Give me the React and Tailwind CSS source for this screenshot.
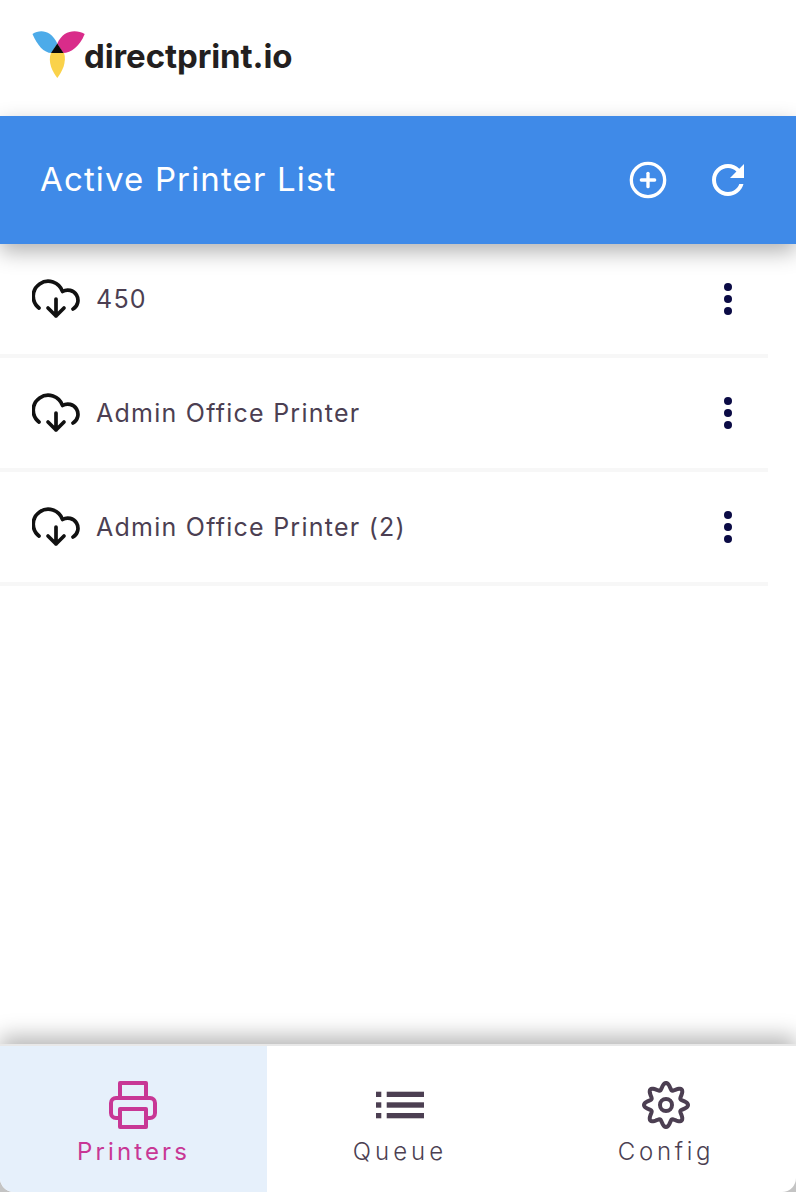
import React from 'react';
import { CirclePlus } from 'lucide-react';

const printers = ['450', 'Admin Office Printer', 'Admin Office Printer (2)'];

// 8 rounded lobes around the centre of a 48x48 box
const gearPath =
    Array.from({ length: 160 }, (_, i) => {
        const a = (i / 160) * Math.PI * 2;
        const r = 18.8 + 3.2 * Math.cos(8 * a);
        return `${i === 0 ? 'M' : 'L'}${(24 + r * Math.sin(a)).toFixed(2)} ${(24 - r * Math.cos(a)).toFixed(2)}`;
    }).join('') + 'Z';

const Logo = () => (
    <svg width="54" height="48" viewBox="32 31 54 48" className="mt-[31px] shrink-0 self-start">
        <path d="M32.500 34C40 29 51 30 57.300 43.500L51.500 53C44 53 37 45 32.500 34Z" fill="#4dabe9" />
        <path d="M84.700 34C76 29 63 30 57.300 43.500L63 53C71 53 80 46 84.700 34Z" fill="#d92c8a" />
        <path d="M51 52.700H64C67 62 62 72 57.300 78C52.500 72 47.500 62 51 52.700Z" fill="#fad24a" />
        <path d="M57.300 43.500L63.500 53H51Z" fill="#0a0a0a" />
    </svg>
);

const RefreshIcon = () => (
    <svg width="48" height="48" viewBox="0 0 24 24" fill="#ffffff">
        <path d="M17.65 6.35C16.2 4.9 14.21 4 12 4c-4.42 0-7.99 3.58-7.99 8s3.57 8 7.99 8c3.73 0 6.84-2.55 7.73-6h-2.08c-.82 2.33-3.04 4-5.65 4-3.31 0-6-2.69-6-6s2.69-6 6-6c1.66 0 3.14.69 4.22 1.78L13 11h7V4l-2.350 2.350z" />
    </svg>
);

const CloudIcon = () => (
    <svg width="48" height="40" viewBox="0 0 48 40" fill="none" stroke="#111111" strokeWidth="3.7" strokeLinecap="round" strokeLinejoin="round" className="shrink-0">
        <path d="M7 29A15 15 0 1 1 30.500 12.500A10.200 10.200 0 0 1 41 30" />
        <path d="M24 20V37M16 29L24 37L32 29" />
    </svg>
);

const MoreIcon = () => (
    <svg width="48" height="48" viewBox="0 0 48 48" fill="#0b0b45">
        <circle cx="24" cy="12" r="4" />
        <circle cx="24" cy="24" r="4" />
        <circle cx="24" cy="36" r="4" />
    </svg>
);

const PrinterIcon = () => (
    <svg width="48" height="48" viewBox="0 0 48 48" fill="none" stroke="#c83795" strokeWidth="4" strokeLinejoin="round" className="-ml-px">
        <path d="M11 15V2H37V15" />
        <path d="M11 37H7A5 5 0 0 1 2 32V22A5 5 0 0 1 7 17H41A5 5 0 0 1 46 22V32A5 5 0 0 1 41 37H37" />
        <rect x="11" y="28" width="26" height="18" />
    </svg>
);

const ListIcon = () => (
    <svg width="48" height="48" viewBox="0 0 48 48" fill="#4c3f52">
        <rect x="0" y="10.700" width="5.300" height="5.300" />
        <rect x="10.700" y="10.700" width="37.300" height="5.300" />
        <rect x="0" y="21.300" width="5.300" height="5.400" />
        <rect x="10.700" y="21.300" width="37.300" height="5.400" />
        <rect x="0" y="32" width="5.300" height="5.300" />
        <rect x="10.700" y="32" width="37.300" height="5.300" />
    </svg>
);

const GearIcon = () => (
    <svg width="48" height="48" viewBox="0 0 48 48" fill="none" stroke="#4c3f52" strokeWidth="4">
        <path d={gearPath} />
        <circle cx="24" cy="24" r="6" />
    </svg>
);

const App = () => {
    return (
        <div className="flex h-[1192px] w-[796px] flex-col overflow-hidden bg-white font-['Inter',sans-serif]">
            <div className="flex h-[116px] shrink-0 items-center pl-8">
                <Logo />
                <span className="ml-[-2px] mt-[-2px] text-[33px] font-bold tracking-[-0.1px] text-[#231f20]">directprint.io</span>
            </div>

            <div className="relative z-10 flex h-32 shrink-0 items-center justify-between bg-[#3f8ae8] pl-10 pr-11 shadow-[0_8px_20px_rgba(0,0,0,0.3)]">
                <h1 className="text-[33px] font-normal tracking-[1.15px] text-white">Active Printer List</h1>
                <div className="flex items-center gap-8">
                    <div className="flex size-12 items-center justify-center">
                        <CirclePlus size={40} color="#ffffff" strokeWidth={2} />
                    </div>
                    <RefreshIcon />
                </div>
            </div>

            <div className="flex-1">
                {printers.map((name) => (
                    <div key={name} className="mr-7 flex h-[114px] items-center border-b-4 border-[#f7f7f7] pl-8 pr-4">
                        <CloudIcon />
                        <span className="ml-4 mt-px flex-1 text-[25px] tracking-[1.25px] text-[#4c3f52]">{name}</span>
                        <MoreIcon />
                    </div>
                ))}
            </div>

            <div className="relative z-10 flex h-[148px] shrink-0 bg-[#c4c4c4] shadow-[0_-8px_20px_rgba(0,0,0,0.28)]">
                <div className="flex w-full overflow-hidden rounded-b-[14px] border-t-2 border-[#e8e8e8] bg-white">
                    <div className="flex w-[267px] shrink-0 flex-col items-center bg-[#e6f0fb] pt-[35px] text-[#c83795]">
                        <PrinterIcon />
                        <span className="mt-[5px] text-[24px] tracking-[3.1px]">Printers</span>
                    </div>
                    <div className="flex w-[266px] shrink-0 flex-col items-center pt-[35px] text-[#4c3f52]">
                        <ListIcon />
                        <span className="mt-[5px] text-[24px] font-light tracking-[4px]">Queue</span>
                    </div>
                    <div className="flex w-[266px] shrink-0 flex-col items-center pt-[35px] text-[#4c3f52]">
                        <GearIcon />
                        <span className="mt-[5px] text-[24px] font-light tracking-[3.7px]">Config</span>
                    </div>
                </div>
            </div>
        </div>
    );
};

export default App;
